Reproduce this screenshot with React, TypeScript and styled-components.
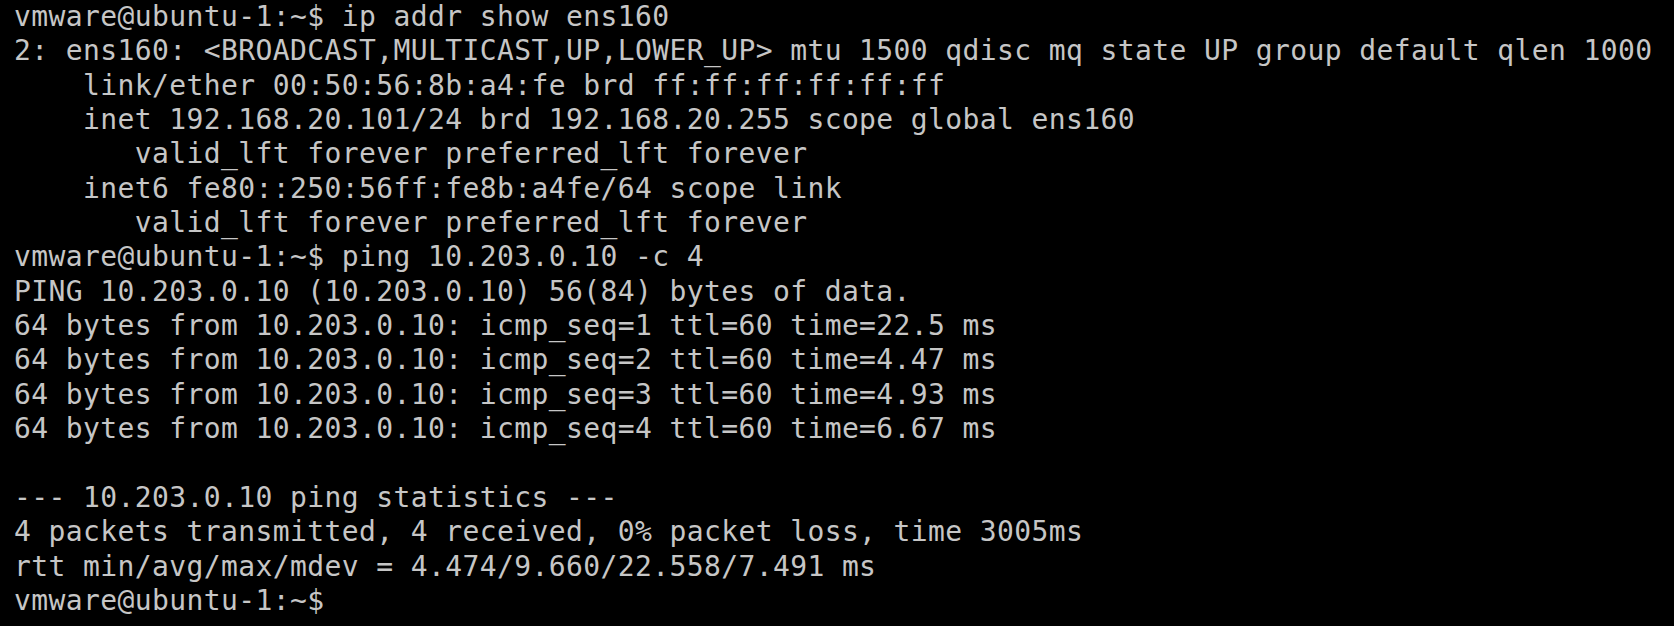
import React from "react";
import styled, { createGlobalStyle } from "styled-components";

const Global = createGlobalStyle`
    html, body {
        margin: 0;
        padding: 0;
        background: #000;
        overflow: hidden;
    }
`

const Screen = styled.div`
    width: 1674px;
    height: 626px;
    background-color: #000;
    padding: 0 0 0 14px;
    box-sizing: border-box;
    font-family: "DejaVu Sans Mono", "Liberation Mono", monospace;
    font-size: 28px;
    letter-spacing: 0.39px;
    line-height: 34.35px;
    color: #c6c6c6;
`

const Line = styled.div`
    white-space: pre;
    height: 34.35px;
`

const lines = [
    "vmware@ubuntu-1:~$ ip addr show ens160",
    "2: ens160: <BROADCAST,MULTICAST,UP,LOWER_UP> mtu 1500 qdisc mq state UP group default qlen 1000",
    "    link/ether 00:50:56:8b:a4:fe brd ff:ff:ff:ff:ff:ff",
    "    inet 192.168.20.101/24 brd 192.168.20.255 scope global ens160",
    "       valid_lft forever preferred_lft forever",
    "    inet6 fe80::250:56ff:fe8b:a4fe/64 scope link",
    "       valid_lft forever preferred_lft forever",
    "vmware@ubuntu-1:~$ ping 10.203.0.10 -c 4",
    "PING 10.203.0.10 (10.203.0.10) 56(84) bytes of data.",
    "64 bytes from 10.203.0.10: icmp_seq=1 ttl=60 time=22.5 ms",
    "64 bytes from 10.203.0.10: icmp_seq=2 ttl=60 time=4.47 ms",
    "64 bytes from 10.203.0.10: icmp_seq=3 ttl=60 time=4.93 ms",
    "64 bytes from 10.203.0.10: icmp_seq=4 ttl=60 time=6.67 ms",
    "",
    "--- 10.203.0.10 ping statistics ---",
    "4 packets transmitted, 4 received, 0% packet loss, time 3005ms",
    "rtt min/avg/max/mdev = 4.474/9.660/22.558/7.491 ms",
    "vmware@ubuntu-1:~$",
];

const App = () => {
    return (
        <Screen>
            <Global />
            {lines.map((l, i) => (
                <Line key={i}>{l}</Line>
            ))}
        </Screen>
    );
};

export default App;
